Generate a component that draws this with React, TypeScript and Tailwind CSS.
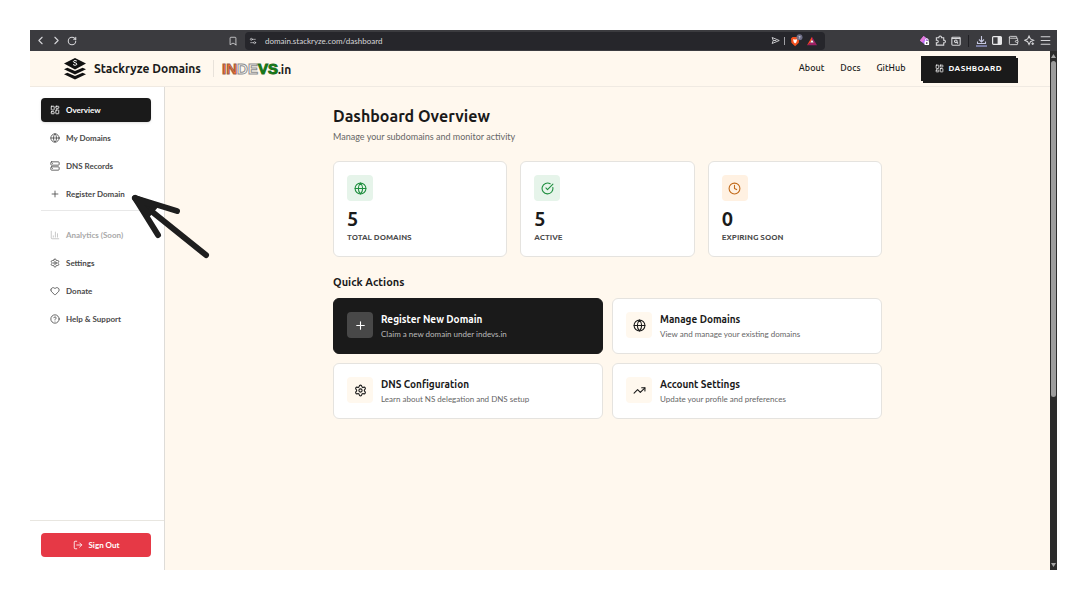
import type { FC, ReactNode } from 'react';
import {
  Bookmark,
  ChartColumn,
  ChevronLeft,
  ChevronRight,
  CircleCheckBig,
  CircleQuestionMark,
  Clock,
  Globe,
  Heart,
  LayoutDashboard,
  LogOut,
  Menu,
  Plus,
  RotateCw,
  Server,
  Settings,
  Settings2,
  TrendingUp,
  Wallet,
  type LucideIcon,
} from 'lucide-react';

interface NavItem {
  label: string;
  icon: LucideIcon;
  active?: boolean;
  disabled?: boolean;
}

const mainNav: NavItem[] = [
  { label: 'Overview', icon: LayoutDashboard, active: true },
  { label: 'My Domains', icon: Globe },
  { label: 'DNS Records', icon: Server },
  { label: 'Register Domain', icon: Plus },
];

const extraNav: NavItem[] = [
  { label: 'Analytics (Soon)', icon: ChartColumn, disabled: true },
  { label: 'Settings', icon: Settings },
  { label: 'Donate', icon: Heart },
  { label: 'Help & Support', icon: CircleQuestionMark },
];

const stats = [
  { value: 5, label: 'Total Domains', icon: Globe, tone: 'bg-[#e6f4ea] text-[#1e8e3e]' },
  { value: 5, label: 'Active', icon: CircleCheckBig, tone: 'bg-[#e6f4ea] text-[#1e8e3e]' },
  { value: 0, label: 'Expiring Soon', icon: Clock, tone: 'bg-[#fff1e2] text-[#c26a1a]' },
];

const actions = [
  { title: 'Register New Domain', text: 'Claim a new domain under indevs.in', icon: Plus, dark: true },
  { title: 'Manage Domains', text: 'View and manage your existing domains', icon: Globe },
  { title: 'DNS Configuration', text: 'Learn about NS delegation and DNS setup', icon: Settings },
  { title: 'Account Settings', text: 'Update your profile and preferences', icon: TrendingUp },
];

const BarButton: FC<{ label: string; children: ReactNode }> = ({ label, children }) => (
  <button type="button" aria-label={label} className="flex w-4 items-center justify-center">
    {children}
  </button>
);

const BrowserBar: FC = () => (
  <div className="flex h-[21px] shrink-0 items-center bg-[#3b3b3f] text-[#d6d6d9]">
    <div className="flex w-[195px] items-center pl-[2px]">
      <BarButton label="Back"><ChevronLeft size={13} /></BarButton>
      <BarButton label="Forward"><ChevronRight size={13} /></BarButton>
      <BarButton label="Reload"><RotateCw size={10} strokeWidth={2.5} /></BarButton>
    </div>
    <BarButton label="Bookmark"><Bookmark size={10} /></BarButton>
    <div className="ml-1 flex h-[18px] min-w-0 flex-1 items-center rounded bg-[#26262b] px-1">
      <Settings2 size={8} className="shrink-0" />
      <input
        aria-label="Address"
        defaultValue="domain.stackryze.com/dashboard"
        className="ml-2 min-w-0 flex-1 bg-transparent font-['Lato',sans-serif] text-[8px] leading-3 outline-none"
      />
      <svg width="9" height="9" viewBox="0 0 12 12" fill="none" stroke="currentColor" strokeWidth="1.2">
        <path d="M1.5 2 11 6 1.5 10 3 6zM3 6h4" />
      </svg>
      <span className="mx-1 h-2 w-px bg-[#a0a0a5]" />
      <svg width="14" height="14" viewBox="0 0 14 14">
        <path d="M3.6 3h5l1.6 1.5-.4 4.3L6.1 12.3 2.4 8.8 2 4.5z" fill="#f4511e" />
        <path d="M4 5.2l1.4.4h1.4l1.4-.4-.8 3-1.3 1.2-1.3-1.2z" fill="#fff" />
        <circle cx="10.5" cy="3.2" r="3" fill="#6e6e86" />
        <path d="M9.7 2.5h1.5l-1 2.2" stroke="#d8d8e8" strokeWidth=".7" fill="none" />
      </svg>
      <svg width="10" height="10" viewBox="0 0 10 10" className="mr-1 ml-1">
        <path d="M5 .7 10 9.3H0l3.3-2.9h3.4L5 3.7z" fill="#9e1f63" />
        <path d="M5 .7v3L3.3 6.4 0 9.3z" fill="#ff4724" />
        <path d="M3.3 6.4 5 3.7l1.7 2.7z" fill="#fff" />
      </svg>
    </div>
    <div className="ml-[91px] flex items-center pr-1">
      <BarButton label="Privacy extension">
        <svg width="11" height="11" viewBox="0 0 12 12">
          <path d="M5 1 10 5 6 10 1 6z" fill="#b56bf5" />
          <path d="M5 1 7.4 3 3.4 8 1 6z" fill="#e67bd8" />
          <rect x="6" y="6.5" width="5" height="4.5" rx="1" fill="#fff" />
          <path d="M7 6.5v-1a1.5 1.5 0 0 1 3 0v1" fill="none" stroke="#fff" />
          <circle cx="8.5" cy="8.8" r=".9" fill="#222" />
        </svg>
      </BarButton>
      <BarButton label="Extensions">
        <svg width="11" height="11" viewBox="0 0 12 12" fill="none" stroke="currentColor" strokeWidth="1.2">
          <path d="M1.5 3h2.7a1.5 1.5 0 1 1 2.9 0h2.4v2.7a1.5 1.5 0 1 1 0 2.900V11h-8V8.500a1.500 1.500 0 1 0 0-2.800z" />
        </svg>
      </BarButton>
      <BarButton label="Search tabs">
        <svg width="10" height="10" viewBox="0 0 12 12" fill="none" stroke="currentColor" strokeWidth="1.3">
          <rect x="1" y="1.5" width="10" height="9.5" rx="1" />
          <path d="M1 3h10M7 7.5l1.5 1.5" />
          <circle cx="5.8" cy="6.3" r="1.6" />
        </svg>
      </BarButton>
      <span className="mx-1 h-3 w-px bg-[#202024]" />
      <BarButton label="Downloads">
        <svg width="11" height="12" viewBox="0 0 11 12" fill="none" stroke="#c5c7e0" strokeWidth="1.1">
          <path d="M5.5 1v5.5M3 4.500l2.500 2.500L8 4.500M1.500 6.500v2h8v-2" />
          <path d="M0 11h11" stroke="#aeb2f2" />
        </svg>
      </BarButton>
      <BarButton label="Side panel">
        <svg width="10" height="9" viewBox="0 0 10 9">
          <rect x=".6" y=".6" width="8.8" height="7.8" rx="1" fill="none" stroke="#e6e6e8" strokeWidth="1.2" />
          <rect x="5.6" y="1" width="3.8" height="7" fill="#e6e6e8" />
        </svg>
      </BarButton>
      <BarButton label="Wallet"><Wallet size={11} /></BarButton>
      <BarButton label="Assistant">
        <svg width="11" height="11" viewBox="0 0 12 12" fill="none" stroke="currentColor" strokeWidth="1.1">
          <path d="M5.500 1 7 4.300 10.500 5.800 7 7.300 5.500 10.500 4 7.300.8 5.800 4 4.300z" />
          <path d="M9.500 8v3M8 9.500h3" />
        </svg>
      </BarButton>
      <BarButton label="Menu"><Menu size={13} /></BarButton>
    </div>
  </div>
);

const StackLogo: FC = () => (
  <svg width="24" height="24" viewBox="0 0 24 24" className="shrink-0">
    <path d="M1 17.200 4.400 15.700 12 19l7.600-3.300L23 17.200 12 22.600z" fill="#111" />
    <path d="M1 12.200 4.400 10.700 12 14l7.600-3.300L23 12.200 12 17.600z" fill="#111" />
    <path d="M12 1 23 6.400 12 12.400 1 6.400z" fill="#111" />
    <path
      d="M13.900 4.200c-.6-.8-3.400-1-3.500.4-.1 1.500 3.500.8 3.500 2.500 0 1.500-3 1.500-3.900.3"
      fill="none"
      stroke="#fff"
      strokeWidth="1"
    />
  </svg>
);

const Header: FC = () => (
  <header className="flex h-9 shrink-0 items-center border-b border-[#f0eae2] pr-[34px] pl-[33px]">
    <a href="#home" className="flex items-center">
      <StackLogo />
      <span className="ml-[7px] text-[12px] leading-4 font-semibold text-[#1a1a1a]">Stackryze Domains</span>
    </a>
    <a href="#indevs" className="ml-3 flex h-[17px] items-center border-l border-[#e8e2da] pl-2 leading-none">
      <span className="font-['Liberation_Sans',sans-serif] text-[15px] font-bold">
        <span className="text-[#ff6a2b] [-webkit-text-stroke:1px_#9c6248]">IN</span>
        <span className="text-white [-webkit-text-stroke:1px_#8d8d8d]">DE</span>
        <span className="text-[#0c8a0c] [-webkit-text-stroke:1px_#1c6b1c]">VS</span>
      </span>
      <span className="pt-[3px] text-[12px] font-semibold text-[#1a1a1a]">.in</span>
    </a>
    <nav className="ml-auto flex items-center gap-4 text-[9px] font-medium text-[#1a1a1a]">
      <a href="#about">About</a>
      <a href="#docs">Docs</a>
      <a href="#github">GitHub</a>
      <a
        href="#dashboard"
        className="flex h-[25px] items-center gap-1 bg-[#1a1a1a] px-[14px] text-[8px] font-bold tracking-wider text-white uppercase shadow-[2px_2px_0_#1a1a1a]"
      >
        <LayoutDashboard size={9} />
        Dashboard
      </a>
    </nav>
  </header>
);

const navTone = ({ active, disabled }: NavItem) => {
  if (active) return 'bg-[#1a1a1a] text-white shadow-sm';
  return disabled ? 'text-[#a8a8a8]' : 'text-[#4a4a4a]';
};

const NavList: FC<{ items: NavItem[] }> = ({ items }) => (
  <ul className="flex flex-col gap-1">
    {items.map((item) => (
      <li key={item.label}>
        <button
          type="button"
          disabled={item.disabled}
          className={`flex h-6 w-full items-center gap-[6px] rounded px-[9px] font-['Lato',sans-serif] text-[8px] font-bold ${navTone(item)}`}
        >
          <item.icon size={10} strokeWidth={item.disabled ? 1.5 : 2} />
          {item.label}
        </button>
      </li>
    ))}
  </ul>
);

const Sidebar: FC = () => (
  <aside className="flex w-[135px] shrink-0 flex-col border-r border-[#dedcd8] bg-white">
    <nav className="flex-1 pt-[11px] pr-[13px] pl-[11px]">
      <NavList items={mainNav} />
      <hr className="mt-1 mb-3 border-[#e8e8e8]" />
      <NavList items={extraNav} />
    </nav>
    <div className="border-t border-[#e8e6e0] pt-3 pr-[13px] pb-[13px] pl-[11px]">
      <button
        type="button"
        className="flex h-6 w-full items-center justify-center gap-[6px] rounded bg-[#e63946] font-['Lato',sans-serif] text-[8px] font-bold text-white"
      >
        <LogOut size={10} />
        Sign Out
      </button>
    </div>
  </aside>
);

const Dashboard: FC = () => (
  <main className="min-w-0 flex-1 px-4 pt-[19px]">
    <div className="mx-auto max-w-[549px]">
      <h1 className="text-[16px] leading-5 font-semibold text-[#1a1a1a]">Dashboard Overview</h1>
      <p className="mt-[5px] font-['Lato',sans-serif] text-[9px] leading-3 text-[#666]">
        Manage your subdomains and monitor activity
      </p>

      <div className="mt-[18px] grid grid-cols-3 gap-[13px]">
        {stats.map((stat) => (
          <div key={stat.label} className="rounded-md border border-[#e5e3df] bg-white p-[13px]">
            <div className={`flex size-[26px] items-center justify-center rounded ${stat.tone}`}>
              <stat.icon size={13} />
            </div>
            <p className="mt-[7px] text-[20px] leading-[22px] font-bold text-[#1a1a1a]">{stat.value}</p>
            <p className="mt-[2px] text-[8px] leading-[11px] font-semibold text-[#4a4a4a] uppercase">{stat.label}</p>
          </div>
        ))}
      </div>

      <h2 className="mt-[18px] text-[11px] leading-[14px] font-semibold text-[#1a1a1a]">Quick Actions</h2>
      <div className="mt-[9px] grid grid-cols-2 gap-[9px]">
        {actions.map((action) => (
          <a
            key={action.title}
            href="#action"
            className={`flex items-start gap-2 rounded-md border p-[13px] ${
              action.dark ? 'border-[#1a1a1a] bg-[#1a1a1a] text-white' : 'border-[#e5e3df] bg-white text-[#1a1a1a]'
            }`}
          >
            <span
              className={`flex size-[26px] shrink-0 items-center justify-center rounded ${
                action.dark ? 'bg-[#484848]' : 'bg-[#fff8ee]'
              }`}
            >
              <action.icon size={13} />
            </span>
            <span>
              <span className="block text-[10px] leading-4 font-semibold">{action.title}</span>
              <span
                className={`mt-px block font-['Lato',sans-serif] text-[8px] leading-[11px] ${
                  action.dark ? 'text-[#bababa]' : 'text-[#666]'
                }`}
              >
                {action.text}
              </span>
            </span>
          </a>
        ))}
      </div>
    </div>
  </main>
);

const Scrollbar: FC = () => (
  <div className="flex w-[7px] shrink-0 flex-col items-center bg-[#2b2b2b] py-[3px]">
    <svg width="5" height="4" viewBox="0 0 5 4"><path d="M2.500 0 5 4H0z" fill="#a5a5a5" /></svg>
    <div className="mt-[3px] flex w-full flex-1 flex-col items-center">
      <div className="w-[5px] flex-[335] rounded-full bg-[#9c9c9c]" />
      <div className="flex-[165]" />
    </div>
    <svg width="5" height="4" viewBox="0 0 5 4"><path d="M0 0h5L2.500 4z" fill="#a5a5a5" /></svg>
  </div>
);

export default function App() {
  return (
    <div className="flex min-h-screen flex-col bg-white p-[30px] font-['Ubuntu','Noto_Sans',sans-serif]">
      <div className="relative flex flex-1 flex-col bg-[#fff8ee]">
        <BrowserBar />
        <div className="flex flex-1">
          <div className="flex min-w-0 flex-1 flex-col">
            <Header />
            <div className="flex flex-1">
              <Sidebar />
              <Dashboard />
            </div>
          </div>
          <Scrollbar />
        </div>
        <svg
          className="pointer-events-none absolute top-40 left-[100px]"
          width="84"
          height="72"
          viewBox="0 0 84 72"
          fill="none"
          stroke="#1e1e1e"
          strokeWidth="6"
          strokeLinecap="round"
          strokeLinejoin="round"
        >
          <path d="M76 65 5 8 47 21M5 8l23 37" />
          <path d="M5 8l20 8-7 8z" fill="#1e1e1e" />
        </svg>
      </div>
    </div>
  );
}
